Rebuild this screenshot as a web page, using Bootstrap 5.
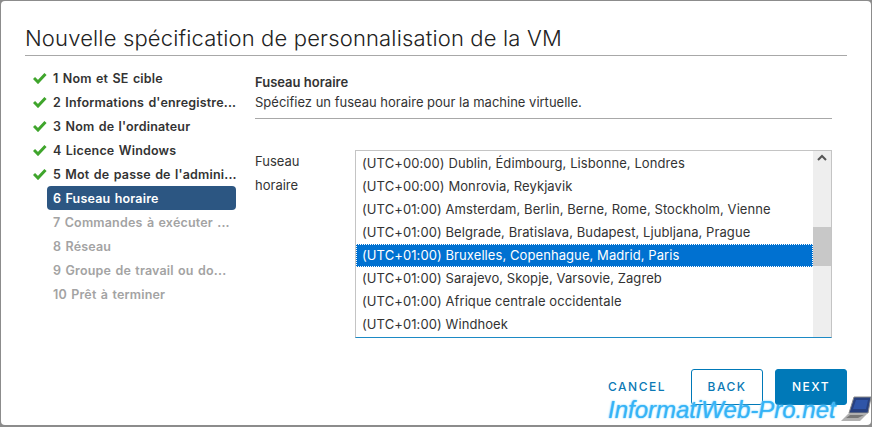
<!DOCTYPE html>
<html lang="fr">
<head>
    <meta charset="UTF-8">
    <meta name="viewport" content="width=device-width, initial-scale=1.0">
    <title>Nouvelle spécification de personnalisation de la VM</title>
    <link href="https://cdn.jsdelivr.net/npm/bootstrap@5.3.0/dist/css/bootstrap.min.css" rel="stylesheet">
    <style>
        html, body { height: 100%; }
        body { background: #8c8c8c; font-family: "Inter", "Liberation Sans", sans-serif; font-size: 13px; color: #333; overflow: hidden; }
        .vm-dialog { position: relative; width: 870px; height: 424px; margin: 1px 0 0 1px; background: #fff; border-radius: 4px; padding: 0 24px; }
        .vm-title { font-size: 22px; font-weight: 300; letter-spacing: 0.16px; color: #222; height: 55px; line-height: 75px; margin: 0; border-bottom: 1px solid #a8a8a8; white-space: nowrap; }
        .vm-body { height: 310px; }
        .vm-steps { width: 212px; padding: 10px 0 0 8px; flex: none; }
        .vm-step { height: 24px; font-weight: 600; font-size: 12.5px; letter-spacing: 0.18px; word-spacing: 1px; white-space: nowrap; }
        .vm-step svg { width: 14px; height: 12px; flex: none; }
        .vm-steps .vm-step-text { width: 189px; height: 24px; line-height: 23px; padding: 1px 0 0 6px; border-radius: 4px; overflow: hidden; }
        .vm-step.is-active .vm-step-text { background: #2c5682; color: #fff; }
        .vm-step.is-off .vm-step-text { color: #a3a3a3; }
        .vm-nocheck { width: 14px; flex: none; }
        .vm-main { width: 577px; margin-left: 18px; }
        .vm-head { padding-top: 16px; height: 63px; border-bottom: 1px solid #a8a8a8; line-height: 20px; }
        .vm-head strong { font-weight: 600; display: block; }
        .vm-label { width: 100px; line-height: 24px; padding-top: 30px; flex: none; }
        .vm-listbox { width: 477px; height: 188px; margin-top: 31px; border: 1px solid #c4c4c4; border-bottom-color: #1d8ac5; }
        .vm-rows { padding-top: 1px; }
        .vm-row { height: 23px; line-height: 23px; padding-left: 6px; letter-spacing: 0.08px; white-space: nowrap; }
        .vm-row.is-selected { background: #0071d1; color: #fff; outline: 1px dotted #fff; outline-offset: -1px; }
        .vm-scroll { width: 18px; background: #eee; flex: none; position: relative; }
        .vm-thumb { position: absolute; left: 0; right: 0; top: 76px; height: 39px; background: #c8c8c8; }
        .vm-scroll svg { display: block; margin: 3px auto 0; }
        .vm-actions { height: 59px; padding-top: 3px; }
        .vm-btn { width: 72px; height: 36px; padding: 0; font-size: 12px; font-weight: 500; letter-spacing: 1.5px; border-radius: 3px; color: #0b79b5; }
        .vm-btn-link { border: 0; background: none; margin-right: 18px; }
        .vm-btn-outline { border: 1px solid #0079b8; background: #fff; margin-right: 12px; }
        .vm-btn-fill { border: 1px solid #0079b8; background: #0079b8; color: #fff; }
        .vm-mark { position: absolute; left: 608px; top: 396px; font-family: "Liberation Sans", sans-serif; font-style: italic; font-size: 24px; line-height: 28px; color: #35b3f5; white-space: nowrap; text-shadow: 0 0 2px #7fd2ff, 0 0 1px #7fd2ff; }
        .vm-laptop { position: absolute; left: 840px; top: 396px; }
    </style>
</head>
<body>
    <div class="vm-dialog">
        <h1 class="vm-title">Nouvelle spécification de personnalisation de la VM</h1>
        <div class="vm-body d-flex">
            <div class="vm-steps" id="steps"></div>
            <div class="vm-main">
                <div class="vm-head">
                    <strong>Fuseau horaire</strong>
                    Spécifiez un fuseau horaire pour la machine virtuelle.
                </div>
                <div class="d-flex">
                    <div class="vm-label">Fuseau<br>horaire</div>
                    <div class="vm-listbox d-flex">
                        <div class="vm-rows flex-grow-1 overflow-hidden" id="zones"></div>
                        <div class="vm-scroll">
                            <svg width="12" height="8" viewBox="0 0 12 8"><path d="M2 6 L6 2 L10 6" fill="none" stroke="#555" stroke-width="2"/></svg>
                            <div class="vm-thumb"></div>
                        </div>
                    </div>
                </div>
            </div>
        </div>
        <div class="vm-actions d-flex justify-content-end">
            <button class="btn vm-btn vm-btn-link">CANCEL</button>
            <button class="btn vm-btn vm-btn-outline">BACK</button>
            <button class="btn vm-btn vm-btn-fill">NEXT</button>
        </div>
    </div>
    <div class="vm-mark">InformatiWeb-Pro.net</div>
    <svg class="vm-laptop" width="32" height="27" viewBox="0 0 32 27">
        <path d="M14 1 L31 1 L28 17 L9 17 Z" fill="#27407f" stroke="#8a8a8a"/>
        <path d="M16 4 L28 4 L26 13 L13 13 Z" fill="#2f55a8"/>
        <path d="M9 17 L28 17 L20 25 L1 25 Z" fill="#b0b0b0"/>
        <path d="M10 19 L24 19 L18 22 L6 22 Z" fill="#777"/>
    </svg>

    <script>
        // Wizard steps and time zones
const stepList = [
    { text: "1 Nom et SE cible", state: "done" },
    { text: "2 Informations d'enregistre...", state: "done" },
    { text: "3 Nom de l'ordinateur", state: "done" },
    { text: "4 Licence Windows", state: "done" },
    { text: "5 Mot de passe de l'admini...", state: "done" },
    { text: "6 Fuseau horaire", state: "active" },
    { text: "7 Commandes à exécuter ...", state: "off" },
    { text: "8 Réseau", state: "off" },
    { text: "9 Groupe de travail ou do...", state: "off" },
    { text: "10 Prêt à terminer", state: "off" }
];
const zoneList = [
    "(UTC+00:00) Dublin, Édimbourg, Lisbonne, Londres",
    "(UTC+00:00) Monrovia, Reykjavik",
    "(UTC+01:00) Amsterdam, Berlin, Berne, Rome, Stockholm, Vienne",
    "(UTC+01:00) Belgrade, Bratislava, Budapest, Ljubljana, Prague",
    "(UTC+01:00) Bruxelles, Copenhague, Madrid, Paris",
    "(UTC+01:00) Sarajevo, Skopje, Varsovie, Zagreb",
    "(UTC+01:00) Afrique centrale occidentale",
    "(UTC+01:00) Windhoek"
];
const check = `<svg viewBox="0 0 14 12"><path d="M1 6 L5 10 L12.500 2" fill="none" stroke="#3fa52c" stroke-width="3"/></svg>`;

document.getElementById("steps").innerHTML = stepList.map(step => {
    const cls = step.state === "active" ? "is-active" : step.state === "off" ? "is-off" : "";
    const mark = step.state === "done" ? check : `<span class="vm-nocheck"></span>`;
    return `<div class="vm-step d-flex align-items-center ${cls}">${mark}<div class="vm-step-text">${step.text}</div></div>`;
}).join("");

document.getElementById("zones").innerHTML = zoneList.map((zone, i) =>
    `<div class="vm-row ${i === 4 ? "is-selected" : ""}">${zone}</div>`
).join("");
    </script>
    <script src="https://cdn.jsdelivr.net/npm/bootstrap@5.3.0/dist/js/bootstrap.bundle.min.js"></script>
</body>
</html>
